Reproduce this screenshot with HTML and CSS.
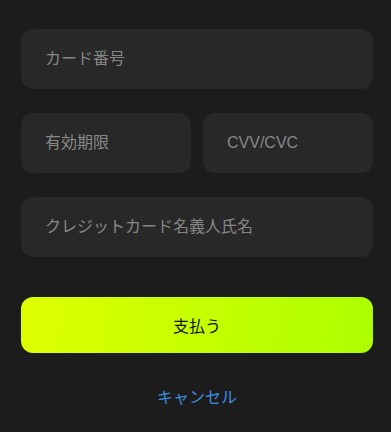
FILE: index.html
```html
<!DOCTYPE html>
<html lang="ja">
<head>
<meta charset="utf-8">
<link rel="stylesheet" href="styles.css">
</head>
<body>
<form class="pay">
  <div class="field"><span class="ph">カード番号</span></div>
  <div class="row">
    <div class="field"><span class="ph">有効期限</span></div>
    <div class="field"><span class="ph">CVV/CVC</span></div>
  </div>
  <div class="field"><span class="ph">クレジットカード名義人氏名</span></div>
  <button type="button" class="btn">支払う</button>
  <div class="cancel">キャンセル</div>
</form>
</body>
</html>
```
FILE: styles.css
```css
html, body {
  margin: 0;
  padding: 0;
  background: #1c1c1c;
}
body {
  font-family: "Liberation Sans", "Noto Sans CJK JP", sans-serif;
}
.pay {
  display: flex;
  flex-direction: column;
  gap: 24px;
  padding: 29px 18px 0 21px;
}
.row {
  display: grid;
  grid-template-columns: 1fr 1fr;
  gap: 12px;
}
.field {
  height: 60px;
  background: #282828;
  border-radius: 12px;
  display: flex;
  align-items: center;
  padding-left: 24px;
}
.ph {
  color: #878787;
  font-size: 16px;
  line-height: 1;
}
.btn {
  margin-top: 16px;
  height: 56px;
  border: none;
  border-radius: 12px;
  background: linear-gradient(100deg, #dfff00 0%, #c6ff00 50%, #acff00 100%);
  color: #111;
  font-family: "Liberation Sans", "Noto Sans CJK JP", sans-serif;
  font-size: 16px;
  font-weight: 400;
}
.cancel {
  margin-top: 9px;
  text-align: center;
  color: #3d8ee0;
  font-size: 16px;
  line-height: 24px;
}
```
